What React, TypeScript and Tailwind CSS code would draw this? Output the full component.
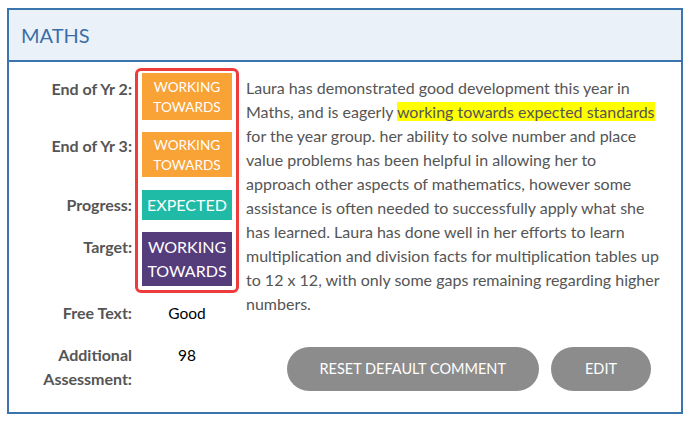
import React from "react";

const font = { fontFamily: "Lato, 'Open Sans', Arial, sans-serif" };

function Label({ children, className = "" }: { children: React.ReactNode; className?: string }) {
  return (
    <div className={`col-start-1 text-right text-[16px] leading-[24px] font-bold text-[#555555] ${className}`}>
      {children}
    </div>
  );
}

export default function App() {
  return (
    <div className="pt-2 pl-[7px] bg-white min-h-screen" style={font}>
      <div className="w-[676px] border-2 border-[#3a75b0] bg-white">
        <div className="h-[52px] bg-[#ebf1f9] border-b-2 border-[#3a75b0] flex items-center pl-3">
          <h2 className="text-[20px] leading-none text-[#3a6ea8]">MATHS</h2>
        </div>

        <div className="flex pt-[6px] pb-[21px]">
          {/* grades */}
          <div className="grid grid-cols-[123px_104px] gap-x-[3px] content-start">
            <div className="col-start-2 row-start-1 row-end-5 border-[3px] border-[#ee3b3b] rounded-md" />

            <Label className="row-start-1 pt-[9px]">End of Yr 2:</Label>
            <div className="col-start-2 row-start-1 mx-[7px] mt-[5px] h-[47px] bg-[#f9a236] text-white text-[13.6px] leading-[20px] flex items-center justify-center text-center">
              WORKING<br />TOWARDS
            </div>

            <Label className="row-start-2 pt-[14px]">End of Yr 3:</Label>
            <div className="col-start-2 row-start-2 mx-[7px] mt-[12px] h-[45px] bg-[#f9a236] text-white text-[13.6px] leading-[20px] flex items-center justify-center text-center">
              WORKING<br />TOWARDS
            </div>

            <Label className="row-start-3 pt-[16px]">Progress:</Label>
            <div className="col-start-2 row-start-3 mx-[7px] mt-[13px] h-[30px] bg-[#1fbba6] text-white text-[16px] leading-[24px] flex items-center justify-center text-center">
              EXPECTED
            </div>

            <Label className="row-start-4 pt-[15px]">Target:</Label>
            <div className="col-start-2 row-start-4 mx-[7px] mt-[12px] mb-[7px] h-[54px] bg-[#553c7b] text-white text-[16px] leading-[24px] flex items-center justify-center text-center">
              WORKING<br />TOWARDS
            </div>

            <Label className="row-start-5 mt-[8px]">Free Text:</Label>
            <div className="col-start-2 row-start-5 mt-[8px] text-center text-[15.5px] leading-[24px] text-black">Good</div>

            <Label className="row-start-6 mt-[18px]">
              Additional
              <br />
              Assessment:
            </Label>
            <div className="col-start-2 row-start-6 mt-[18px] text-center text-[15.5px] leading-[24px] text-black">98</div>
          </div>

          {/* comment */}
          <div className="flex-1 ml-[7px] flex flex-col">
            <p className="mt-2 w-[418px] text-[16px] leading-[24px] text-[#555555]">
              Laura has demonstrated good development this year in Maths, and is eagerly{" "}
              <span className="bg-[#ffff00]">working towards expected standards </span>
              for the year group. her ability to solve number and place value problems has been helpful in
              allowing her to approach other aspects of mathematics, however some assistance is often needed to
              successfully apply what she has learned. Laura has done well in her efforts to learn multiplication
              and division facts for multiplication tables up to 12 x 12, with only some gaps remaining regarding
              higher numbers.
            </p>
            <div className="mt-[31px] flex justify-end gap-3 pr-[30px]">
              <button className="h-[44px] px-[33px] rounded-full bg-[#8c8c8c] text-white text-[14.5px]">
                RESET DEFAULT COMMENT
              </button>
              <button className="h-[44px] w-[100px] rounded-full bg-[#8c8c8c] text-white text-[14.5px]">
                EDIT
              </button>
            </div>
          </div>
        </div>
      </div>
    </div>
  );
}
